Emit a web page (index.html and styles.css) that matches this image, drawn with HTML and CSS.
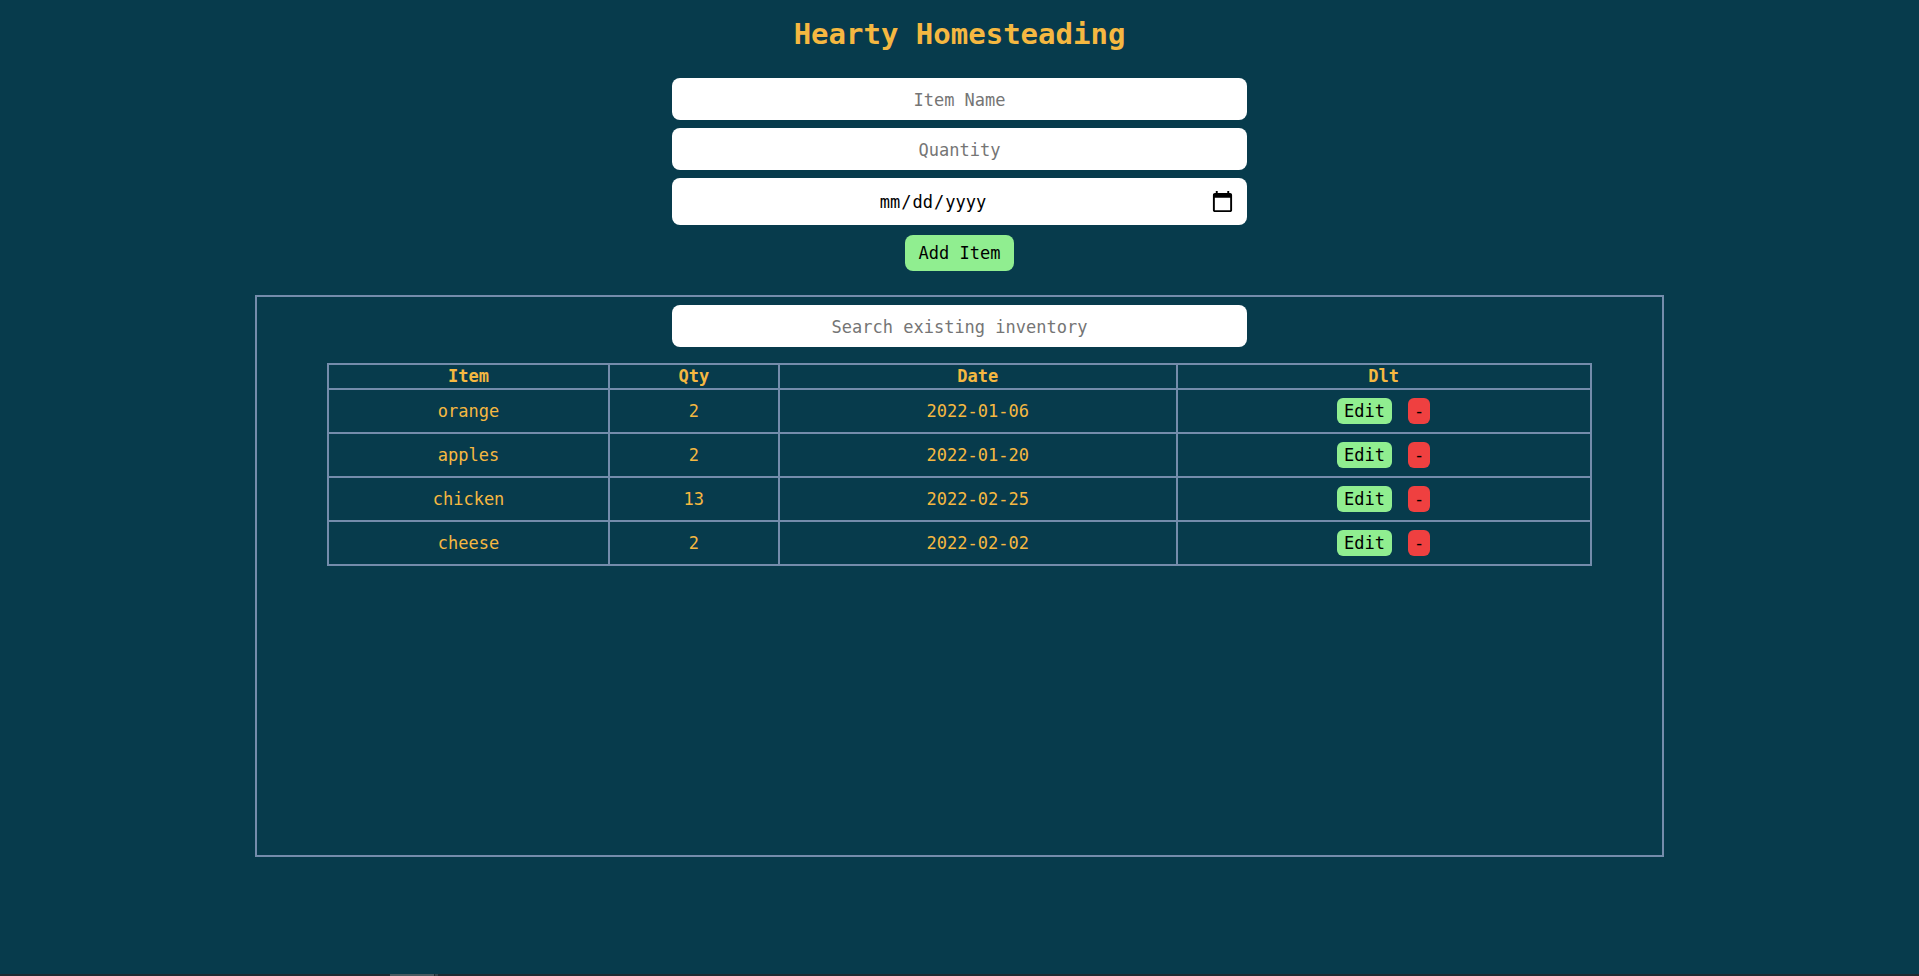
FILE: index.html
```html
<!DOCTYPE html>
<html lang="en-US">
<head>
<meta charset="utf-8">
<title>Hearty Homesteading</title>
<link rel="stylesheet" href="styles.css">
</head>
<body>
<main class="page">
  <h1 class="title">Hearty Homesteading</h1>
  <form class="item-form">
    <input class="field" type="text" placeholder="Item Name" aria-label="Item Name">
    <input class="field" type="text" placeholder="Quantity" aria-label="Quantity">
    <input class="field field-date" type="date" aria-label="Date">
    <button class="btn btn-add" type="button">Add Item</button>
  </form>
  <section class="inventory">
    <input class="field" type="text" placeholder="Search existing inventory" aria-label="Search existing inventory">
    <table class="items">
      <thead>
        <tr><th class="col-item">Item</th><th class="col-qty">Qty</th><th class="col-date">Date</th><th>Dlt</th></tr>
      </thead>
      <tbody>
        <tr><td>orange</td><td>2</td><td>2022-01-06</td><td><div class="actions"><button class="btn btn-edit" type="button">Edit</button><button class="btn btn-delete" type="button">-</button></div></td></tr>
        <tr><td>apples</td><td>2</td><td>2022-01-20</td><td><div class="actions"><button class="btn btn-edit" type="button">Edit</button><button class="btn btn-delete" type="button">-</button></div></td></tr>
        <tr><td>chicken</td><td>13</td><td>2022-02-25</td><td><div class="actions"><button class="btn btn-edit" type="button">Edit</button><button class="btn btn-delete" type="button">-</button></div></td></tr>
        <tr><td>cheese</td><td>2</td><td>2022-02-02</td><td><div class="actions"><button class="btn btn-edit" type="button">Edit</button><button class="btn btn-delete" type="button">-</button></div></td></tr>
      </tbody>
    </table>
  </section>
</main>
<footer class="strip"><span class="strip-active"></span><span class="strip-next"></span></footer>
</body>
</html>
```
FILE: styles.css
```css
* {
  box-sizing: border-box;
}

body {
  margin: 0;
  min-height: 100vh;
  display: flex;
  flex-direction: column;
  background: #073b4c;
  color: #f5b841;
  font-family: Consolas, "DejaVu Sans Mono", monospace;
  font-size: 17px;
  line-height: 21px;
}

.page {
  flex: 1;
  display: flex;
  flex-direction: column;
  align-items: center;
}

.title {
  margin: 18px 0 28px;
  font-size: 29px;
  line-height: 32px;
}

.item-form {
  display: flex;
  flex-direction: column;
  align-items: center;
  gap: 8px;
}

.field {
  width: 30vw;
  height: 42px;
  padding: 12px 12px 10px;
  border: 0;
  border-radius: 8px;
  background: #fff;
  color: #000;
  font: inherit;
  text-align: center;
}

.field::placeholder {
  color: #757575;
}

.field-date {
  height: 47px;
}

.field-date::-webkit-calendar-picker-indicator {
  width: 25px;
  height: 25px;
  margin-left: 28px;
  padding: 0;
}

.btn {
  border: 0;
  border-radius: 6px;
  background: lightgreen;
  color: #000;
  font: inherit;
}

.btn-add {
  height: 36px;
  margin-top: 2px;
  padding: 0 14px;
  border-radius: 8px;
}

.inventory {
  width: 73.4%;
  min-height: 562px;
  margin-top: 24px;
  padding-top: 8px;
  display: flex;
  flex-direction: column;
  align-items: center;
  gap: 16px;
  border: 2px solid #748cab;
}

.items {
  width: 90%;
  table-layout: fixed;
  border-collapse: collapse;
  text-align: center;
}

.items th,
.items td {
  padding: 1px;
  border: 2px solid #748cab;
}

.items .col-item {
  width: 22.2%;
}

.items .col-qty {
  width: 13.5%;
}

.items .col-date {
  width: 31.5%;
}

.actions {
  display: flex;
  justify-content: center;
  gap: 16px;
  padding: 7px 0;
}

.btn-edit,
.btn-delete {
  height: 26px;
  padding: 0 7px;
}

.btn-delete {
  padding: 0 6px;
  background: #ef4040;
}

.strip {
  height: 2px;
  display: flex;
  padding-left: 390px;
  gap: 1px;
  background: #1f2a31;
}

.strip-active {
  width: 44px;
  background: #4a5960;
}

.strip-next {
  width: 3px;
  background: #36454c;
}
```
